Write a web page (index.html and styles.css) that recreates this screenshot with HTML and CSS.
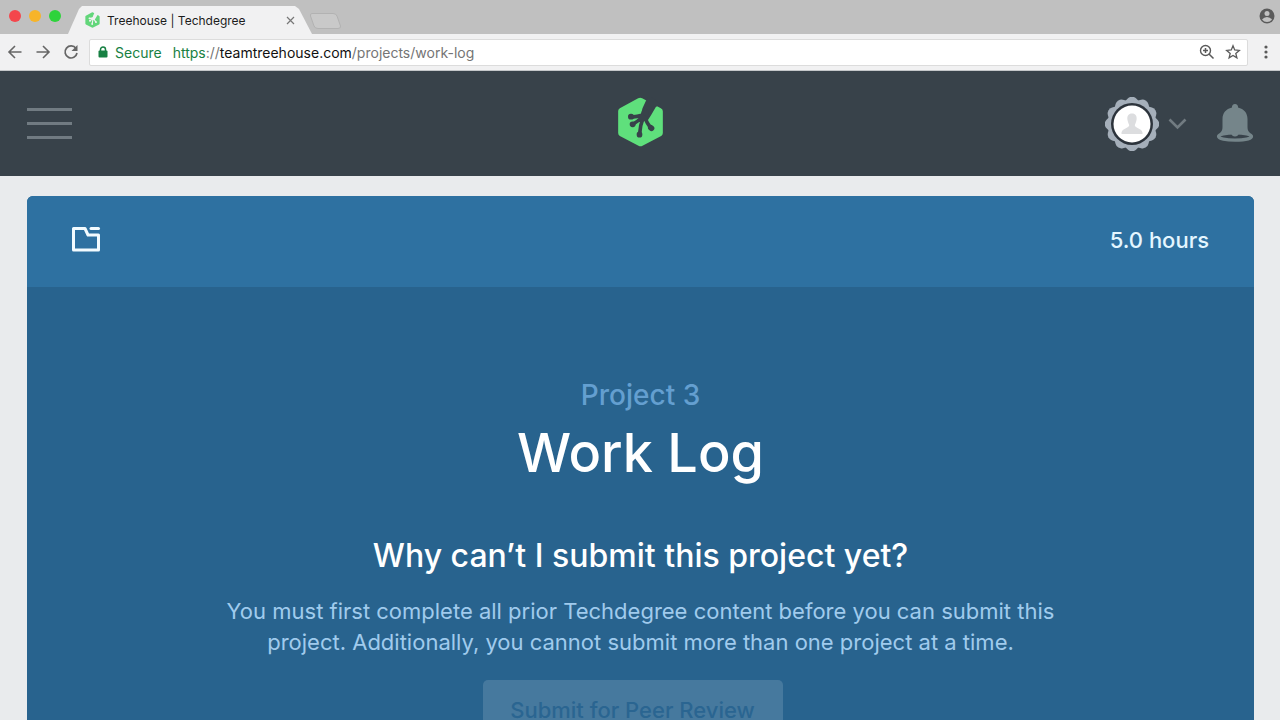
FILE: index.html
```html
<!DOCTYPE html>
<html lang="en">
<head>
<meta charset="utf-8">
<title>Treehouse | Techdegree</title>
<link rel="stylesheet" href="styles.css">
</head>
<body>
<svg class="sprites" aria-hidden="true">
  <symbol id="logo" viewBox="84 20 140 150">
    <path fill="currentColor" d="M147 24Q153 21 159 24L215 54Q221 57 221 63V128Q221 134 216 137L160 166Q154 169 148 166L92 137Q87 134 87 128V62Q87 57 92 54Z"/>
    <g fill="none" stroke="var(--ground)" stroke-linecap="round" stroke-linejoin="round">
      <path fill="var(--ground)" stroke="none" d="M160 54L170 32L180 14L214 42L200 50L186 74L176 90L154 78Z"/>
      <path stroke-width="21" d="M168 66L163 82"/>
      <path stroke-width="11" d="M158 75Q138 81 126 79M160 80Q145 94 132 101M162 82Q153 106 152 126M166 81Q174 99 184 112"/>
      <path stroke-width="17" d="M125 79H126M130 102H131M151 132V133M185 112L187 114"/>
    </g>
  </symbol>
</svg>
<div class="browser">
  <div class="tabstrip">
    <div class="lights"><span class="light red"></span><span class="light yellow"></span><span class="light green"></span></div>
    <div class="tab">
      <svg class="tab-logo"><use href="#logo"/></svg>
      <span class="tab-title">Treehouse | Techdegree</span>
      <button class="plain tab-close" aria-label="Close tab"><svg width="9" height="9" viewBox="0 0 9 9"><path d="M1 1l7 7M8 1l-7 7" stroke="#777" stroke-width="1.2"/></svg></button>
    </div>
    <button class="plain new-tab" aria-label="New tab"><svg width="34" height="18" viewBox="0 0 34 18"><path d="M4 1.500H25Q28 1.500 29 4L32.500 14Q33 16.500 30 16.500H10Q7 16.500 6 14L2.500 4Q2 1.500 4 1.500Z" fill="#c9c9c9" stroke="#b2b2b2"/></svg></button>
    <button class="plain profile" aria-label="Profile"><svg width="16" height="16" viewBox="0 0 16 16"><circle cx="8" cy="8" r="7.500" fill="#5b5b5b"/><circle cx="8" cy="5.500" r="2.500" fill="#c2c2c2"/><path d="M3 11.500Q5 9 8 9T13 11.500Q11 14 8 14T3 11.500Z" fill="#c2c2c2"/></svg></button>
  </div>
  <div class="toolbar">
    <button class="plain" aria-label="Back"><svg width="16" height="16" viewBox="0 0 16 16"><path d="M14.500 8H2M8 2L2 8l6 6" fill="none" stroke="#666" stroke-width="1.600"/></svg></button>
    <button class="plain" aria-label="Forward"><svg width="16" height="16" viewBox="0 0 16 16"><path d="M1.500 8H14M8 2l6 6-6 6" fill="none" stroke="#666" stroke-width="1.600"/></svg></button>
    <button class="plain" aria-label="Reload"><svg width="16" height="16" viewBox="0 0 16 16"><path d="M13 4.500A6 6 0 1 0 14 9" fill="none" stroke="#666" stroke-width="1.700"/><path d="M14.500 1V7H8.500Z" fill="#666"/></svg></button>
    <div class="address">
      <svg width="10" height="12" viewBox="0 0 10 12"><path d="M2.500 5V3.500a2.500 2.500 0 0 1 5 0V5" fill="none" stroke="#178043" stroke-width="1.500"/><rect x="0.500" y="4.500" width="9" height="7" rx="1" fill="#178043"/></svg>
      <span class="secure">Secure</span>
      <a class="url" href="#"><span class="scheme">https</span>://<span class="host">teamtreehouse.com</span>/projects/work-log</a>
      <button class="plain zoom" aria-label="Zoom"><svg width="16" height="16" viewBox="0 0 16 16"><path d="M10 10l4.500 4.500M4 6.500h5M6.500 4v5" stroke="#5a5a5a" stroke-width="1.500"/><circle cx="6.500" cy="6.500" r="5" fill="none" stroke="#5a5a5a" stroke-width="1.400"/></svg></button>
      <button class="plain" aria-label="Bookmark"><svg width="16" height="16" viewBox="0 0 16 16"><path d="M8 1.800L9.700 6l4.600.4-3.500 3 1.100 4.500L8 11.500l-3.900 2.400 1.100-4.500-3.500-3L6.300 6Z" fill="none" stroke="#5a5a5a" stroke-width="1.300"/></svg></button>
    </div>
    <button class="plain" aria-label="Menu"><svg width="16" height="16" viewBox="0 0 16 16" fill="#5a5a5a"><circle cx="8" cy="3" r="1.600"/><circle cx="8" cy="8" r="1.600"/><circle cx="8" cy="13" r="1.600"/></svg></button>
  </div>
</div>
<header class="site-header">
  <button class="plain burger" aria-label="Open navigation"><span></span><span></span><span></span></button>
  <a class="brand" href="#" aria-label="Treehouse"><svg class="brand-logo"><use href="#logo"/></svg></a>
  <div class="account">
    <button class="plain user" aria-label="Account menu">
      <svg width="54" height="54" viewBox="-27 -27 54 54">
        <g fill="#a5afba"><rect x="-21" y="-21" width="42" height="42" rx="6" transform="rotate(15)"/><rect x="-21" y="-21" width="42" height="42" rx="6" transform="rotate(45)"/><rect x="-21" y="-21" width="42" height="42" rx="6" transform="rotate(75)"/></g>
        <circle r="21" fill="#2c333b"/><circle r="18.500" fill="#fff"/>
        <path d="M0-10.500c3.500 0 5 2.500 4.600 6C4.300-2 3 0 2.800 1.500 3 4 10 4.500 10.500 8.500V10h-21V8.500C-10 4.500-3 4-2.800 1.500-3 0-4.300-2-4.600-4.500c-.4-3.500 1.100-6 4.600-6Z" fill="#dcdddf"/>
      </svg>
      <svg width="19" height="12" viewBox="0 0 19 12"><path d="M1.500 1.500l8 8 8-8" fill="none" stroke="#717b81" stroke-width="2.600"/></svg>
    </button>
    <button class="plain bell" aria-label="Notifications">
      <svg width="38" height="38" viewBox="0 0 38 38">
        <path fill="#75858a" d="M19 0a3 3 0 0 1 3 3.500C28 5 31.500 9 31.500 15v8c0 3 .8 4.500 2.500 6H4c1.700-1.500 2.500-3 2.500-6v-8C6.500 9 10 5 16 3.500A3 3 0 0 1 19 0Z"/>
        <ellipse cx="19" cy="32.500" rx="16.500" ry="3.700" fill="#38424a" stroke="#75858a" stroke-width="3.200"/>
        <path fill="#75858a" d="M15 29h8q-1 3.500-4 3.500T15 29Z"/>
      </svg>
    </button>
  </div>
</header>
<main class="page">
  <article class="card">
    <div class="card-bar">
      <svg width="29" height="26" viewBox="0 0 29 26"><path d="M1.500 1.500H13L16 8H26.500V23H1.500Z" fill="none" stroke="#f2fbff" stroke-width="3" stroke-linejoin="round"/><path d="M19 1.500h7.500" stroke="#f2fbff" stroke-width="3" stroke-linecap="round"/></svg>
      <span class="hours">5.0 hours</span>
    </div>
    <div class="card-body">
      <p class="eyebrow">Project 3</p>
      <h1>Work Log</h1>
      <h2>Why can’t I submit this project yet?</h2>
      <p class="reason">You must first complete all prior Techdegree content before you can submit this project. Additionally, you cannot submit more than one project at a time.</p>
      <button class="submit" disabled>Submit for Peer Review</button>
    </div>
  </article>
</main>
</body>
</html>
```
FILE: styles.css
```css
* { box-sizing: border-box; }
html { overflow: hidden; }
body {
  margin: 0;
  height: 100vh;
  display: flex;
  flex-direction: column;
  overflow: hidden;
  background: #e9ebed;
  font-family: Inter, "Open Sans", sans-serif;
}
h1, h2, p { margin: 0; }
svg { display: block; flex: none; }
.sprites { width: 0; height: 0; position: absolute; }
.plain { display: flex; align-items: center; border: 0; padding: 0; background: none; cursor: pointer; }

.browser { flex: none; border-bottom: 1px solid #c4c7c9; }
.tabstrip { display: flex; align-items: center; height: 34px; padding: 0 5px 2px 9px; background: #c0c0c0; }
.lights { display: flex; gap: 8px; }
.light { width: 12px; height: 12px; border-radius: 50%; }
.red { background: #f4464c; }
.yellow { background: #f7b429; }
.green { background: #2ed33b; }
.tab {
  display: flex;
  align-items: center;
  align-self: flex-end;
  width: 244px;
  height: 28px;
  margin-left: 7px;
  margin-bottom: -2px;
  padding: 0 17px 0 17px;
  background: #f1f1f2;
  clip-path: polygon(0 100%, 11px 3px, 14px 0, 227px 0, 231px 3px, 100% 100%);
}
.tab-logo { --ground: #f1f1f2; width: 15px; height: 16px; color: #62d67a; }
.tab-title { margin-left: 7px; font-size: 12px; color: #1c1c1c; }
.tab-close { margin-left: auto; }
.new-tab { margin-top: 10px; margin-left: -4px; }
.profile { margin-left: auto; }
.toolbar { display: flex; align-items: center; gap: 12px; height: 36px; padding: 0 6px 0 7px; background: #f1f1f2; }
.address {
  display: flex;
  flex: 1;
  align-items: center;
  height: 27px;
  padding: 0 6px 0 8px;
  border: 1px solid #dcdcdc;
  border-radius: 2px;
  background: #fff;
  font-size: 14px;
}
.toolbar .address { margin-left: -2px; margin-right: -2px; }
.secure { margin-left: 7px; color: #178043; }
.url { margin-left: 11px; color: #757575; text-decoration: none; }
.scheme { color: #178043; }
.host { color: #111; }
.zoom { margin-left: auto; margin-right: 10px; }

.site-header {
  --ground: #38424a;
  flex: none;
  display: grid;
  grid-template-columns: 1fr auto 1fr;
  align-items: center;
  height: 105px;
  padding: 0 26px 0 27px;
  background: #38424a;
}
.burger { flex-direction: column; gap: 11px; width: 45px; }
.burger span { width: 100%; height: 3px; background: #717b82; }
.brand { margin-bottom: 3px; }
.brand-logo { width: 47px; height: 50px; color: #5fe07c; }
.account { display: flex; align-items: center; justify-content: flex-end; gap: 29px; }
.user { gap: 9px; }
.bell { margin-bottom: 2px; }

.page { flex: none; padding: 20px 26px 40px 27px; }
.card { overflow: hidden; border-radius: 6px; background: #28638e; }
.card-bar {
  display: flex;
  align-items: center;
  justify-content: space-between;
  height: 91px;
  padding: 0 45px 4px;
  background: #2e71a1;
}
.hours { font-size: 22px; font-weight: 500; color: #e4f6ff; }
.card-body { display: flex; flex-direction: column; align-items: center; padding: 90px 24px 80px; text-align: center; }
.eyebrow { font-size: 28px; line-height: 36px; font-weight: 500; color: #649fd0; }
h1 { margin-top: 8px; font-size: 54px; line-height: 64px; font-weight: 500; color: #fff; }
h2 { margin-top: 53px; font-size: 32px; line-height: 36px; font-weight: 500; color: #fff; }
.reason { max-width: 860px; margin-top: 22px; font-size: 22px; line-height: 31px; font-weight: 400; color: #a0cbed; }
.submit {
  min-width: 300px;
  height: 60px;
  margin-top: 22px;
  margin-right: 16px;
  border: 0;
  border-radius: 5px;
  background: #46799e;
  font-family: inherit;
  font-size: 22px;
  font-weight: 500;
  color: #2a6591;
}
```
